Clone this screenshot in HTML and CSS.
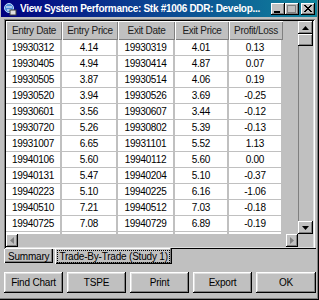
FILE: index.html
```html
<!DOCTYPE html>
<html>
<head>
<meta charset="utf-8">
<link rel="stylesheet" href="styles.css">
</head>
<body>
<div class="win">
  <div class="title">
    <svg class="ticon" width="14" height="14" viewBox="0 0 14 14">
      <circle cx="6" cy="6" r="4.5" fill="#4a8ad8" stroke="#c0e0ff" stroke-width="1"/>
      <path d="M3 5h6M4 8h4" stroke="#fff" stroke-width="1"/>
      <rect x="7" y="8" width="6" height="5" fill="#e0e0e0" stroke="#404040" stroke-width="1"/>
    </svg>
    <span class="ttext">View System Performance: Stk #1006 DDR: Develop...</span>
    <div class="tbtns">
      <span class="tb"><svg width="12" height="10" viewBox="0 0 12 10"><rect x="2" y="7" width="6" height="2" fill="#000"/></svg></span>
      <span class="tb"><svg width="12" height="10" viewBox="0 0 12 10"><rect x="1.5" y="1.5" width="8" height="7" fill="none" stroke="#808080"/><rect x="1" y="1" width="9" height="1" fill="#808080"/></svg></span>
      <span class="tb close"><svg width="12" height="10" viewBox="0 0 12 10"><path d="M2 1l7 7M9 1l-7 7M3 1l7 7M10 1l-7 7" stroke="#000" stroke-width="1"/></svg></span>
    </div>
  </div>
  <div class="body">
    <div class="gridframe">
      <div class="gridarea">
        <div class="table">
          <div class="hd">Entry Date</div><div class="hd">Entry Price</div><div class="hd">Exit Date</div><div class="hd">Exit Price</div><div class="hd">Profit/Loss</div>
          <div class="c">19930312</div><div class="c">4.14</div><div class="c">19930319</div><div class="c">4.01</div><div class="c">0.13</div>
          <div class="c">19930405</div><div class="c">4.94</div><div class="c">19930414</div><div class="c">4.87</div><div class="c">0.07</div>
          <div class="c">19930505</div><div class="c">3.87</div><div class="c">19930514</div><div class="c">4.06</div><div class="c">0.19</div>
          <div class="c">19930520</div><div class="c">3.94</div><div class="c">19930526</div><div class="c">3.69</div><div class="c">-0.25</div>
          <div class="c">19930601</div><div class="c">3.56</div><div class="c">19930607</div><div class="c">3.44</div><div class="c">-0.12</div>
          <div class="c">19930720</div><div class="c">5.26</div><div class="c">19930802</div><div class="c">5.39</div><div class="c">-0.13</div>
          <div class="c">19931007</div><div class="c">6.65</div><div class="c">19931101</div><div class="c">5.52</div><div class="c">1.13</div>
          <div class="c">19940106</div><div class="c">5.60</div><div class="c">19940112</div><div class="c">5.60</div><div class="c">0.00</div>
          <div class="c">19940131</div><div class="c">5.47</div><div class="c">19940204</div><div class="c">5.10</div><div class="c">-0.37</div>
          <div class="c">19940223</div><div class="c">5.10</div><div class="c">19940225</div><div class="c">6.16</div><div class="c">-1.06</div>
          <div class="c">19940510</div><div class="c">7.21</div><div class="c">19940512</div><div class="c">7.03</div><div class="c">-0.18</div>
          <div class="c">19940725</div><div class="c">7.08</div><div class="c">19940729</div><div class="c">6.89</div><div class="c">-0.19</div>
          <div class="c"></div><div class="c"></div><div class="c"></div><div class="c"></div><div class="c"></div>
        </div>
      </div>
      <div class="vscroll">
        <span class="sbtn"><svg width="7" height="4" viewBox="0 0 7 4"><path d="M3.5 0L7 4H0z" fill="#000"/></svg></span>
        <span class="thumb"></span>
        <span class="vtrack"></span>
        <span class="sbtn"><svg width="7" height="4" viewBox="0 0 7 4"><path d="M0 0h7L3.5 4z" fill="#000"/></svg></span>
      </div>
      <div class="hscroll">
        <span class="hbtn"><svg width="4" height="7" viewBox="0 0 4 7"><path d="M4 0v7L0 3.5z" fill="#808080"/></svg></span>
        <span class="htrack"></span>
        <span class="hbtn"><svg width="4" height="7" viewBox="0 0 4 7"><path d="M0 0v7L4 3.5z" fill="#808080"/></svg></span>
      </div>
      <div class="corner"></div>
    </div>
    <div class="tabs">
      <span class="tab">Summary</span>
      <span class="tab sel"><span class="focus">Trade-By-Trade (Study 1)</span></span>
      <span class="tabline"></span>
    </div>
    <div class="buttons">
      <button class="btn">Find Chart</button>
      <button class="btn">TSPE</button>
      <button class="btn">Print</button>
      <button class="btn">Export</button>
      <button class="btn">OK</button>
    </div>
  </div>
</div>
</body>
</html>
```
FILE: styles.css
```css
* { box-sizing: border-box; }
body { margin: 0; background: #c0c0c0; }
.win {
  width: 319px; height: 300px; background: #c0c0c0;
  font-family: "Liberation Sans", Arial, sans-serif;
  box-shadow: inset -1px -1px #000, inset -2px -2px #808080;
  display: flex; flex-direction: column;
  padding: 0 3px 0 2px;
}
.title {
  height: 17px; margin: 0 -1px 0 -1px;
  background: linear-gradient(90deg, #000080 0%, #0a3a90 40%, #10849c 100%);
  display: flex; align-items: center; padding: 0 2px 0 2px;
  color: #fff;
}
.ticon { flex: none; margin-right: 3px; }
.ttext { font-weight: bold; font-size: 10px; letter-spacing: -0.3px; white-space: nowrap; flex: 1; overflow: hidden; }
.tbtns { display: flex; gap: 0; margin-left: 2px; }
.tb {
  width: 14px; height: 12px; background: #c0c0c0; display: flex; align-items: center; justify-content: center;
  box-shadow: inset -1px -1px #000, inset 1px 1px #fff, inset -2px -2px #808080;
}
.tb.close { margin-left: 2px; }
.body { flex: 1; display: flex; flex-direction: column; padding: 2px 0 0 2px; }
.gridframe {
  width: 311px; height: 230px;
  padding: 2px;
  box-shadow: inset 1px 1px #808080, inset -1px -1px #fff, inset 2px 2px #000, inset -2px -2px #dfdfdf;
  display: grid; grid-template-columns: 292px 15px; grid-template-rows: 213px 13px;
}
.gridarea { overflow: hidden; background: #c0c0c0; }
.table {
  display: grid; grid-template-columns: 56px 56px 57px 54px 54px;
  grid-auto-rows: 16px; grid-template-rows: 19px;
  font-size: 10px; letter-spacing: -0.3px; color: #000;
}
.hd {
  background: #c0c0c0; color: #202020; display: flex; align-items: center; justify-content: center;
  box-shadow: inset 1px 1px #fff, inset -1px -1px #808080;
}
.c {
  background: #fff; display: flex; align-items: center; justify-content: center;
  border-right: 2px solid #c0c0c0; border-bottom: 1px solid #c0c0c0;
}
.vscroll { display: flex; flex-direction: column; background: #c0c0c0; box-shadow: inset 1px 0 #808080; }
.sbtn {
  width: 15px; height: 13px; flex: none; background: #c0c0c0; display: flex; align-items: center; justify-content: center;
  box-shadow: inset -1px -1px #000, inset 1px 1px #fff, inset -2px -2px #808080;
}
.thumb {
  width: 15px; height: 12px; flex: none; background: #c0c0c0;
  box-shadow: inset -1px -1px #000, inset 1px 1px #fff, inset -2px -2px #808080;
}
.vtrack { flex: 1; }
.hscroll { display: flex; background: #c0c0c0; }
.hbtn {
  width: 12px; height: 13px; flex: none; display: flex; align-items: center; justify-content: center;
  box-shadow: inset -1px -1px #000, inset 1px 1px #fff, inset -2px -2px #808080;
}
.htrack { flex: 1; }
.corner { background: #c0c0c0; }
.tabs { display: flex; align-items: flex-start; height: 18px; margin-top: -1px; position: relative; }
.tab {
  font-size: 10px; letter-spacing: -0.2px; color: #000; height: 14px; padding: 0 4px;
  display: flex; align-items: center; margin-top: 1px;
  box-shadow: inset 1px 0 #fff, inset -1px -1px #000, inset -2px -2px #808080;
}
.tab.sel { height: 16px; margin-top: 0; padding: 0 3px; margin-left: 2px; }
.focus { outline: 1px dotted #000; outline-offset: 0; padding: 0 1px; line-height: 11px; }
.tabline { flex: 1; height: 1px; background: #000; }
.buttons { display: flex; gap: 4px; margin-top: 6px; padding-left: 0; }
.btn {
  width: 60px; height: 21px; background: #c0c0c0; border: none; padding: 0;
  font-family: "Liberation Sans", Arial, sans-serif; font-size: 10px; letter-spacing: -0.2px; color: #000;
  box-shadow: inset -1px -1px #000, inset 1px 1px #fff, inset -2px -2px #808080, inset 2px 2px #dfdfdf;
}
.btn:last-child { width: 61px; }
```
